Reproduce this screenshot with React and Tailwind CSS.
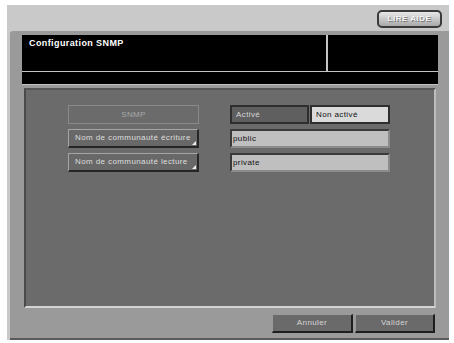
import React from "react";

/* ============================================================
   SNMP CONFIGURATION – PANEL SCREEN
============================================================ */

const font = { fontFamily: '"Liberation Sans", Arial, sans-serif' };

function RaisedButton({ label, corner = false, disabled = false }) {
  if (disabled) {
    return (
      <div className="h-[19px] w-[131px] border border-[#8a8a8a] bg-[#6b6b6b] flex items-center justify-center text-[8px] tracking-[0.4px] text-[#a9a9a9]">
        {label}
      </div>
    );
  }
  return (
    <div className="relative h-[19px] w-[131px] border border-t-[#a5a5a5] border-l-[#a5a5a5] border-b-[#262626] border-r-[#262626] border-b-2 border-r-2 bg-[#686868] flex items-center pl-[6px] text-[8px] tracking-[0.4px] text-[#dedede]">
      {label}
      {corner && (
        <span className="absolute right-[1px] bottom-[1px] w-0 h-0 border-l-[4px] border-l-transparent border-b-[4px] border-b-[#f0f0f0]" />
      )}
    </div>
  );
}

function Field({ value }) {
  return (
    <div className="h-[19px] w-[160px] border-2 border-t-[#3a3a3a] border-l-[#3a3a3a] border-b-[#8c8c8c] border-r-[#8c8c8c] bg-[#bfbfbf] flex items-center pl-[1px] text-[8px] tracking-[0.4px] text-[#111]">
      {value}
    </div>
  );
}

export default function App() {
  return (
    <div className="w-[454px] h-[343px] bg-white pl-[7px] pt-[5px] overflow-hidden" style={font}>
      <div className="w-[442px] h-[335px] bg-[#c9c9c9] flex flex-col">

        {/* top bar */}
        <div className="h-[26px] flex justify-end pr-[7px] pt-[5px]">
          <div className="w-[65px] h-[18px] rounded-[5px] border-2 border-[#3a3a3a] bg-gradient-to-b from-[#e8e8e8] to-[#a9a9a9] flex items-center justify-center text-[8px] font-bold tracking-[0.5px] text-[#f4f4f4] [text-shadow:1px_1px_0_#777]">
            LIRE AIDE
          </div>
        </div>

        {/* main panel */}
        <div className="ml-[3px] flex-1 bg-[#9a9a9a] border-b-2 border-b-[#5a5a5a] rounded-tl-[3px] pl-[12px] pr-[11px] pt-[4px] flex flex-col">

          <div className="w-[416px] h-[37px] bg-black flex border-b border-[#c4c4c4]">
            <div className="w-[306px] border-r-2 border-[#c4c4c4] pl-[7px] pt-[2px] text-[9px] font-bold tracking-[0.4px] text-white">
              Configuration SNMP
            </div>
            <div className="flex-1" />
          </div>
          <div className="w-[416px] h-[13px] bg-black border-b border-[#c4c4c4]" />

          {/* inner panel */}
          <div className="ml-[2px] mt-[3px] w-[412px] h-[220px] bg-[#6b6b6b] border-2 border-t-[#555] border-l-[#4a4a4a] border-b-[#d4d4d4] border-r-[#bdbdbd] pl-[42px] pt-[15px]">
            <div className="flex flex-col gap-[5px]">
              <div className="flex gap-[31px]">
                <RaisedButton label="SNMP" disabled />
                <div className="flex gap-[1px]">
                  <div className="h-[19px] w-[79px] border-2 border-[#2e2e2e] bg-[#5f5f5f] flex items-center pl-[4px] text-[8px] tracking-[0.4px] text-[#d6d6d6]">
                    Activé
                  </div>
                  <div className="h-[19px] w-[80px] border-2 border-[#2e2e2e] bg-[#dadada] flex items-center pl-[4px] text-[8px] tracking-[0.4px] text-[#111]">
                    Non activé
                  </div>
                </div>
              </div>
              <div className="flex gap-[31px]">
                <RaisedButton label="Nom de communauté écriture" corner />
                <Field value="public" />
              </div>
              <div className="flex gap-[31px]">
                <RaisedButton label="Nom de communauté lecture" corner />
                <Field value="private" />
              </div>
            </div>
          </div>

          {/* footer buttons */}
          <div className="mt-[6px] w-[413px] flex justify-end gap-[2px]">
            <div className="w-[81px] h-[19px] border border-t-[#9a9a9a] border-l-[#9a9a9a] border-b-2 border-r-2 border-b-[#1e1e1e] border-r-[#1e1e1e] bg-[#6a6a6a] flex items-center justify-center text-[8px] tracking-[0.4px] text-[#d6d6d6]">
              Annuler
            </div>
            <div className="w-[80px] h-[19px] border border-t-[#9a9a9a] border-l-[#9a9a9a] border-b-2 border-r-2 border-b-[#1e1e1e] border-r-[#1e1e1e] bg-[#6a6a6a] flex items-center justify-center text-[8px] tracking-[0.4px] text-[#d6d6d6]">
              Valider
            </div>
          </div>
        </div>
      </div>
    </div>
  );
}
